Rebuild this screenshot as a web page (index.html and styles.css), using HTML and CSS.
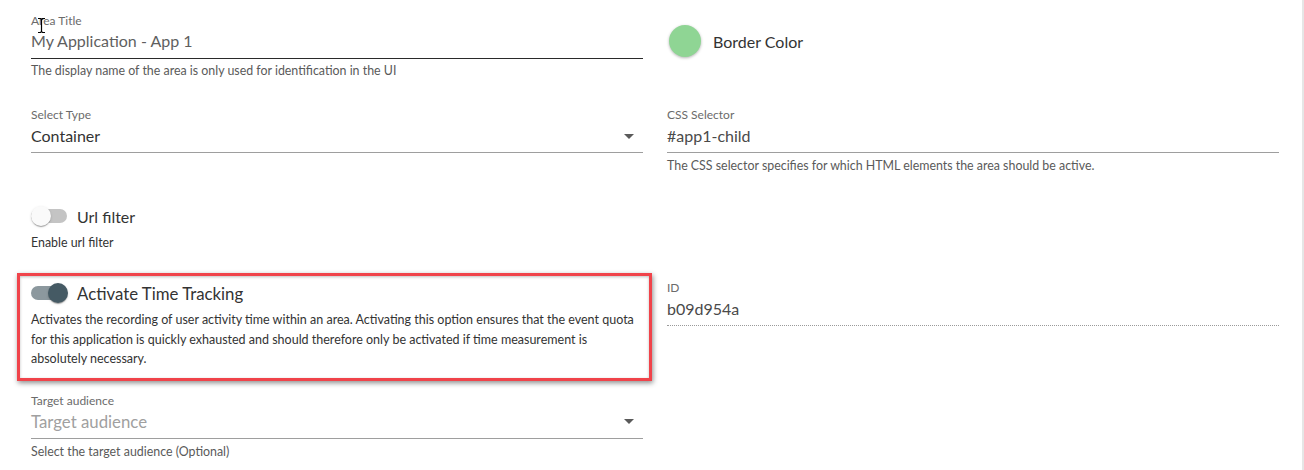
FILE: index.html
```html
<!DOCTYPE html>
<html lang="en">
<head>
<meta charset="utf-8">
<title>Area settings</title>
<link rel="stylesheet" href="styles.css">
</head>
<body>
<div class="page">
  <div class="row row-1">
    <div class="field">
      <div class="label">Area Title</div>
      <div class="control control-dark"><span class="value value-muted">My Application - App 1</span></div>
      <div class="hint">The display name of the area is only used for identification in the UI</div>
    </div>
    <div class="color-field">
      <span class="swatch"></span>
      <span class="color-label">Border Color</span>
    </div>
  </div>

  <div class="row row-2">
    <div class="field">
      <div class="label">Select Type</div>
      <div class="control control-select"><span class="value">Container</span><span class="arrow"></span></div>
    </div>
    <div class="field">
      <div class="label">CSS Selector</div>
      <div class="control"><span class="value value-mid">#app1-child</span></div>
      <div class="hint">The CSS selector specifies for which HTML elements the area should be active.</div>
    </div>
  </div>

  <div class="row row-3">
    <div class="toggle-field">
      <div class="toggle-line">
        <span class="toggle"><span class="bar"></span><span class="thumb"></span></span>
        <span class="toggle-label">Url filter</span>
      </div>
      <div class="hint hint-dark">Enable url filter</div>
    </div>
    <div></div>
  </div>

  <div class="row row-4">
    <div class="highlight">
      <div class="toggle-line">
        <span class="toggle toggle-on"><span class="bar"></span><span class="thumb"></span></span>
        <span class="toggle-label">Activate Time Tracking</span>
      </div>
      <p class="desc">Activates the recording of user activity time within an area. Activating this option ensures that the event quota for this application is quickly exhausted and should therefore only be activated if time measurement is absolutely necessary.</p>
    </div>
    <div class="field field-id">
      <div class="label">ID</div>
      <div class="control control-dotted"><span class="value value-mid">b09d954a</span></div>
    </div>
  </div>

  <div class="row row-5">
    <div class="field">
      <div class="label">Target audience</div>
      <div class="control control-select"><span class="value value-placeholder">Target audience</span><span class="arrow"></span></div>
      <div class="hint">Select the target audience (Optional)</div>
    </div>
    <div></div>
  </div>
</div>
<svg class="cursor" width="9" height="17" viewBox="0 0 9 17" aria-hidden="true">
  <path d="M1 1.5h2.5l1 1 1-1H8M4.5 2.5v12M1 15.5h2.5l1-1 1 1H8" fill="none" stroke="#000" stroke-width="1.2"/>
</svg>
</body>
</html>
```

FILE: styles.css
```css
html, body {
  margin: 0;
  padding: 0;
  background: #fff;
}

body {
  font-family: "Lato", "Noto Sans", sans-serif;
  color: #333;
  position: relative;
  width: 1304px;
  height: 470px;
  overflow: hidden;
}

.page {
  box-sizing: border-box;
  height: 470px;
  padding: 13px 0 0 31px;
  border-right: 2px solid #e6e6e6;
}

.row {
  display: grid;
  grid-template-columns: 612px 612px;
  column-gap: 24px;
  align-items: start;
}

.row-2 { margin-top: 28px; }
.row-3 { margin-top: 30px; }
.row-4 { margin-top: 22px; }
.row-5 { margin-top: 12px; }

.label {
  font-size: 12px;
  line-height: 16px;
  color: #6b6b6b;
}

.control {
  position: relative;
  margin-top: 2px;
  padding-bottom: 5px;
  border-bottom: 1px solid #9e9e9e;
  display: flex;
  align-items: center;
}

.control-dark {
  border-bottom-color: #2a2a2a;
  margin-top: 1px;
  padding-bottom: 6px;
}

.control-dotted {
  border-bottom: 1px dotted #9a9a9a;
}

.value {
  font-size: 16px;
  line-height: 22px;
  color: #333;
}

.value-muted { color: #5f5f5f; }
.value-mid { color: #4a4a4a; }
.value-placeholder { color: #a0a0a0; font-size: 16.8px; }

.control-select .value { flex: 1; }

.arrow {
  width: 0;
  height: 0;
  border-left: 5px solid transparent;
  border-right: 5px solid transparent;
  border-top: 5px solid #5a5a5a;
  margin-right: 9px;
}

.hint {
  margin-top: 5px;
  font-size: 12.4px;
  line-height: 16px;
  color: #5a5a5a;
}

.row-1 .hint { margin-top: 4px; }

.hint-dark { color: #333; margin-top: 7px; }

.color-field {
  display: flex;
  align-items: center;
  gap: 12px;
  height: 32px;
  margin-top: 12px;
  padding-left: 2px;
}

.swatch {
  width: 32px;
  height: 32px;
  border-radius: 50%;
  background: #8fd594;
  box-shadow: 0 1px 3px rgba(0, 0, 0, 0.3), 0 0 0 1px #fff;
}

.color-label {
  font-size: 16px;
  color: #333;
}

.toggle-line {
  display: flex;
  align-items: center;
  height: 24px;
  gap: 10px;
}

.toggle {
  position: relative;
  width: 36px;
  height: 20px;
  flex: none;
}

.toggle .bar {
  position: absolute;
  left: 0;
  top: 3px;
  width: 36px;
  height: 14px;
  border-radius: 7px;
  background: #c4c4c4;
}

.toggle .thumb {
  position: absolute;
  left: 0;
  top: 0;
  width: 20px;
  height: 20px;
  border-radius: 50%;
  background: #fafafa;
  box-shadow: 0 2px 1px -1px rgba(0, 0, 0, 0.2), 0 1px 1px 0 rgba(0, 0, 0, 0.14), 0 1px 3px 0 rgba(0, 0, 0, 0.12);
}

.toggle-on .bar { background: #8c989e; }

.toggle-on .thumb {
  left: 17px;
  background: #455a64;
}

.toggle-label {
  font-size: 16px;
  color: #333;
}

.highlight .toggle-label { font-size: 16.8px; }

.highlight {
  margin: 0 -9px 0 -14px;
  border: 3px solid #f0434a;
  padding: 5px 4px 9px 11px;
  box-shadow: 1px 2px 5px rgba(0, 0, 0, 0.45), inset 0 1px 3px rgba(0, 0, 0, 0.25);
  background: #fff;
}

.desc {
  margin: 5px 0 0;
  font-size: 12.5px;
  line-height: 19.5px;
  color: #333;
}

.field-id { margin-top: 7px; }

.cursor {
  position: absolute;
  left: 37px;
  top: 17px;
}
```
